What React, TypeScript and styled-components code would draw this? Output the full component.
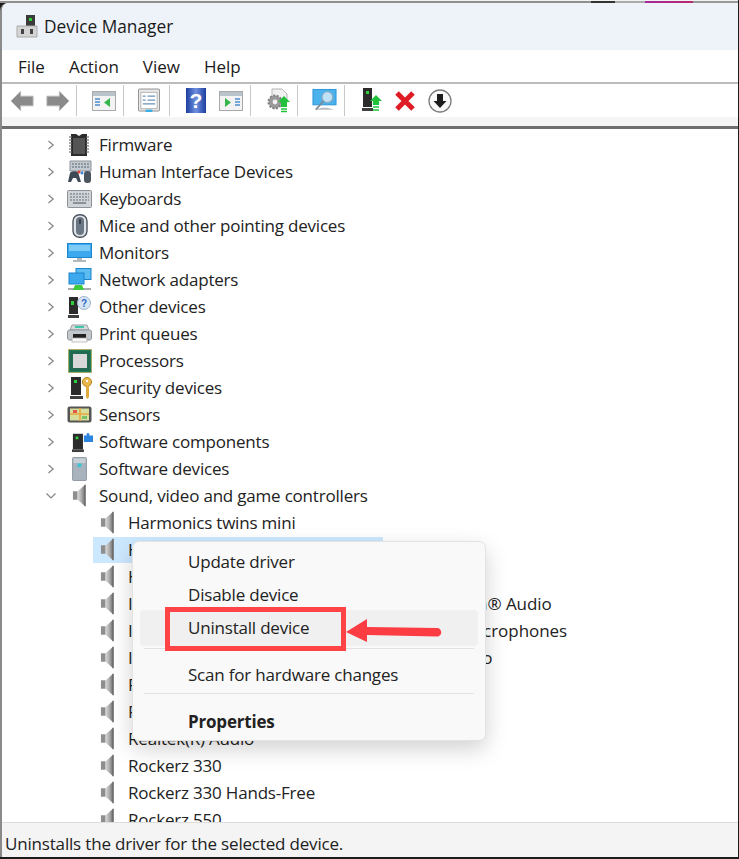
import { ReactNode } from "react";
import styled, { createGlobalStyle } from "styled-components";

const Global = createGlobalStyle`
  html, body { margin: 0; padding: 0; background: #fff; }
  body { font-family: "Open Sans", "Noto Sans", "Liberation Sans", sans-serif; color: #1a1a1a; }
`;

const Window = styled.div`
  position: relative;
  box-sizing: border-box;
  width: 739px;
  height: 859px;
  display: flex;
  flex-direction: column;
  overflow: hidden;
  background: #1c1c1c;
  padding: 0 1px 2px 0;
`;

const Strip = styled.div`
  box-sizing: border-box;
  height: 3px;
  flex: none;
  border-top: 1px solid #f2f2f2;
  background: linear-gradient(
    90deg,
    #8f8f8f 0,
    #8f8f8f 591px,
    #333 591px,
    #333 615px,
    #aaa 615px,
    #aaa 645px,
    #a5289b 645px,
    #b5296f 693px,
    #999 693px
  );
`;

const Frame = styled.div`
  flex: 1;
  min-height: 0;
  display: flex;
  flex-direction: column;
  border-left: 2px solid #8a8a8a;
  border-top-left-radius: 8px;
  overflow: hidden;
  background: #fff;
`;

const TitleBar = styled.div`
  box-sizing: border-box;
  height: 47px;
  flex: none;
  display: flex;
  align-items: center;
  gap: 6px;
  padding: 0 0 1px 14px;
  background: #eef3f9;
  font-size: 17.3px;
`;

const MenuBar = styled.div`
  height: 32px;
  flex: none;
  display: flex;
  align-items: center;
  gap: 24px;
  padding-left: 16px;
  background: #fff;
  border-bottom: 2px solid #bcbcbc;
  font-size: 17px;
`;

const Toolbar = styled.div`
  height: 33px;
  flex: none;
  display: flex;
  align-items: center;
  padding-left: 6px;
  background: #fff;
`;

const Tool = styled.div<{ $w: number; $pl?: number }>`
  box-sizing: border-box;
  width: ${(p) => p.$w}px;
  height: 30px;
  flex: none;
  display: flex;
  align-items: center;
  padding-left: ${(p) => p.$pl ?? 0}px;
`;

const ToolSep = styled.div`
  width: 1px;
  height: 31px;
  flex: none;
  background: #c8c8c8;
`;

const ToolFoot = styled.div`
  height: 9px;
  flex: none;
  background: #f5f5f5;
  border-bottom: 3px solid #6e6e6e;
`;

const Tree = styled.div`
  flex: 1;
  min-height: 0;
  overflow: hidden;
  padding-top: 2px;
  background: #fff;
`;

const Row = styled.div<{ $child?: boolean }>`
  height: 27px;
  display: flex;
  align-items: center;
  white-space: nowrap;
  font-size: 17px;
  letter-spacing: -0.2px;
  color: #222;
  padding-left: ${(p) => (p.$child ? 91 : 42)}px;
`;

const Chevron = styled.div`
  width: 14px;
  height: 14px;
  flex: none;
  display: flex;
  align-items: center;
  justify-content: center;
  margin-right: 9px;
`;

const RowIcon = styled.div`
  width: 32px;
  flex: none;
  height: 27px;
  display: flex;
  align-items: center;
`;

const ChildLabel = styled.div<{ $selected?: boolean; $tail?: boolean }>`
  display: flex;
  align-items: center;
  height: 26px;
  min-width: 283px;
  padding-left: 7px;
  letter-spacing: ${(p) => (p.$tail ? "-0.04px" : "-0.2px")};
  background: ${(p) => (p.$selected ? "#cce8ff" : "transparent")};
`;

const ChildIcon = styled.div`
  width: 28px;
  flex: none;
  display: flex;
  align-items: center;
`;

const StatusBar = styled.div`
  box-sizing: border-box;
  height: 35px;
  flex: none;
  display: flex;
  align-items: center;
  padding: 6px 0 0 3px;
  background: #f4f4f4;
  border-top: 1px solid #dcdcdc;
  font-size: 17px;
  letter-spacing: -0.18px;
  color: #222;
`;

const ContextMenu = styled.div`
  position: absolute;
  left: 132px;
  top: 541px;
  box-sizing: border-box;
  width: 354px;
  height: 200px;
  padding: 4px 7px;
  background: #f9f9f9;
  border: 1px solid #e3e3e3;
  border-radius: 7px;
  box-shadow: 0 8px 22px rgba(0, 0, 0, 0.18);
  font-size: 17px;
  letter-spacing: -0.2px;
  color: #222;
`;

const MenuItem = styled.div<{ $hover?: boolean; $bold?: boolean; $h?: number; $pt?: number; $pb?: number }>`
  box-sizing: border-box;
  height: ${(p) => p.$h ?? 33}px;
  display: flex;
  align-items: center;
  padding: ${(p) => p.$pt ?? 0}px 0 ${(p) => p.$pb ?? 0}px 48px;
  border-radius: 4px;
  font-weight: ${(p) => (p.$bold ? 700 : 400)};
  background: ${(p) => (p.$hover ? "#f0f0f0" : "transparent")};
`;

const MenuSep = styled.div<{ $mt?: number }>`
  height: 1px;
  margin: ${(p) => p.$mt ?? 1}px 4px 1px;
  background: #e2e2e2;
`;

const Highlight = styled.div`
  position: absolute;
  left: 165px;
  top: 607px;
  box-sizing: border-box;
  width: 181px;
  height: 44px;
  border: 5px solid #ff4448;
`;

const Arrow = styled.svg`
  position: absolute;
  left: 344px;
  top: 616px;
`;

function Chev({ open }: { open?: boolean }) {
  return (
    <svg width="12" height="12" viewBox="0 0 12 12" fill="none" stroke="#858585" strokeWidth="1.2">
      {open ? <path d="M1.5 3.5 6 8 10.5 3.5" /> : <path d="M3.5 2 8.2 6 3.5 10" />}
    </svg>
  );
}

function Speaker({ x = 0 }: { x?: number }) {
  return (
    <svg width="15" height="25" viewBox="0 0 16 25" style={{ marginLeft: x }}>
      <defs>
        <linearGradient id="spk" x1="0" x2="1" y1="0" y2="0">
          <stop offset="0" stopColor="#d9d9d9" />
          <stop offset="0.55" stopColor="#a8a8a8" />
          <stop offset="1" stopColor="#6a6a6a" />
        </linearGradient>
      </defs>
      <rect x="1" y="8" width="5" height="9" fill="#8e8e8e" />
      <path d="M6 8 14 1v23l-8-7z" fill="url(#spk)" />
      <path d="M14 1v23" stroke="#6b6b6b" strokeWidth="1.4" />
    </svg>
  );
}

const icons: Record<string, ReactNode> = {
  firmware: (
    <svg width="24" height="24" viewBox="0 0 24 24">
      <path d="M4 1h5l3 2 3-2h5v22H4z" fill="#2b2b2b" />
      <path d="M2 4h20M2 7h20M2 10h20M2 13h20M2 16h20M2 19h20" stroke="#8d8d8d" strokeWidth="1.4" strokeDasharray="2.5 15" />
      <rect x="6" y="5" width="12" height="16" fill="#545454" />
    </svg>
  ),
  hid: (
    <svg width="26" height="24" viewBox="0 0 26 24">
      <path d="M3 1h21v10H3z" fill="#c3cad1" stroke="#8b9299" />
      <path d="M5 4h17M5 7h17" stroke="#7f868d" strokeWidth="1.5" strokeDasharray="2 1" />
      <path d="M1 22l2-9c1-2 6-2 8-1l3 10h-3l-2-4H6l-2 4z" fill="#3f4a57" />
      <rect x="17" y="11" width="7" height="12" rx="3" fill="#4b5560" />
      <circle cx="12" cy="12" r="1.6" fill="#e0453a" />
      <circle cx="15" cy="13" r="1.5" fill="#3a88e0" />
    </svg>
  ),
  keyboard: (
    <svg width="25" height="18" viewBox="0 0 25 18">
      <rect x="0.5" y="0.5" width="24" height="17" rx="1" fill="#cfd3d7" stroke="#8e9398" />
      <path d="M3 4h19M3 7h19M3 10h19" stroke="#8b9096" strokeWidth="1.6" strokeDasharray="2 1" />
      <path d="M6 13h13" stroke="#8b9096" strokeWidth="2" />
    </svg>
  ),
  mouse: (
    <svg width="16" height="24" viewBox="0 0 16 24" style={{ marginLeft: 5 }}>
      <rect x="1" y="0.7" width="14" height="22.6" rx="6.5" fill="#dfe3e7" stroke="#4c5560" strokeWidth="1.4" />
      <rect x="4" y="3" width="8" height="18" rx="4" fill="#6a7683" />
      <rect x="7" y="5" width="2" height="5" rx="1" fill="#36404a" />
    </svg>
  ),
  monitor: (
    <svg width="25" height="20" viewBox="0 0 25 20">
      <rect x="0.5" y="0.5" width="24" height="14" fill="#3ca9ee" stroke="#1b84cc" />
      <rect x="2" y="2" width="21" height="6" fill="#7dcbf7" />
      <path d="M10 15h5v2h4v2H6v-2h4z" fill="#b3b8bd" />
    </svg>
  ),
  network: (
    <svg width="25" height="23" viewBox="0 0 25 23">
      <rect x="9" y="0.5" width="15" height="11" fill="#5cbcf2" stroke="#1b84cc" />
      <rect x="2" y="5" width="15" height="11" fill="#3ca9ee" stroke="#1b84cc" />
      <path d="M1 21h23" stroke="#a8adb2" strokeWidth="2" />
      <path d="M8 17h7l2 5H6z" fill="#3ecb3e" />
    </svg>
  ),
  other: (
    <svg width="25" height="24" viewBox="0 0 25 24">
      <path d="M2 2h9v17H2z" fill="#2b2b2b" />
      <rect x="4" y="6" width="3" height="4" fill="#2fd13a" />
      <path d="M1 20h11v3H1z" fill="#3f3f3f" />
      <circle cx="17" cy="8" r="6.5" fill="#d8e6f4" stroke="#9eb4c9" />
      <text x="17" y="11.5" fontSize="10" fontWeight="700" textAnchor="middle" fill="#2f66c2" fontFamily="Liberation Sans, sans-serif">?</text>
    </svg>
  ),
  print: (
    <svg width="25" height="19" viewBox="0 0 25 19">
      <path d="M5 1h15l2 5H3z" fill="#d5d9dc" stroke="#9aa0a5" />
      <rect x="8" y="2" width="9" height="2" fill="#3fc7a8" />
      <rect x="0.5" y="6" width="24" height="10" rx="2" fill="#c3c8cc" stroke="#8f9499" />
      <rect x="6" y="10" width="13" height="4" fill="#222" />
      <rect x="5" y="14" width="15" height="4" fill="#f6f6f6" stroke="#aaa" strokeWidth="0.7" />
    </svg>
  ),
  processor: (
    <svg width="24" height="24" viewBox="0 0 24 24" style={{ marginLeft: 1 }}>
      <rect x="0.5" y="0.5" width="23" height="23" fill="#1f7d58" stroke="#b79b3d" strokeDasharray="1.5 1" />
      <rect x="2" y="2" width="20" height="20" fill="#21694f" />
      <rect x="5" y="5" width="14" height="14" fill="#d8d8d8" />
    </svg>
  ),
  security: (
    <svg width="24" height="24" viewBox="0 0 24 24" style={{ marginLeft: 2 }}>
      <path d="M2 1h10v18H2z" fill="#2b2b2b" />
      <rect x="5" y="4" width="3" height="3" fill="#2fd13a" />
      <path d="M1 20h13v3H1z" fill="#3f3f3f" />
      <circle cx="18" cy="6" r="4.6" fill="#e8b64a" stroke="#b98a26" />
      <path d="M17 10h3v11l-1.5 2-1.5-2z" fill="#e0ab3c" />
      <circle cx="18" cy="5" r="1.2" fill="#fff" />
    </svg>
  ),
  sensors: (
    <svg width="25" height="17" viewBox="0 0 25 17">
      <rect x="0.5" y="0.5" width="24" height="16" rx="2" fill="#555" />
      <rect x="3" y="2.5" width="19" height="12" fill="#d7dd9c" />
      <path d="M3 8h19M13 2v13" stroke="#eaa93c" strokeWidth="1.6" />
      <rect x="6" y="4" width="4" height="3" fill="#e2574c" />
      <rect x="15" y="10" width="5" height="3" fill="#7cc06a" />
    </svg>
  ),
  softcomp: (
    <svg width="21" height="24" viewBox="0 0 23 24" style={{ marginLeft: 5 }}>
      <path d="M1 3h11v17H1z" fill="#2b2b2b" />
      <rect x="4" y="6" width="3" height="3" fill="#2fd13a" />
      <path d="M0 20h13v3H0z" fill="#3f3f3f" />
      <path d="M13 5h3V3a2 2 0 0 1 3 0v2h4v7H13z" fill="#2c86dd" />
    </svg>
  ),
  softdev: (
    <svg width="15" height="24" viewBox="0 0 16 26" style={{ marginLeft: 5 }}>
      <rect x="0.5" y="0.5" width="15" height="25" rx="1" fill="#a9b3bd" stroke="#8b949d" />
      <rect x="1.5" y="1.5" width="13" height="5" fill="#c6ced6" />
      <rect x="6" y="7" width="4" height="4" fill="#38c6d0" />
    </svg>
  ),
};

const topRows: [string, string][] = [
  ["firmware", "Firmware"],
  ["hid", "Human Interface Devices"],
  ["keyboard", "Keyboards"],
  ["mouse", "Mice and other pointing devices"],
  ["monitor", "Monitors"],
  ["network", "Network adapters"],
  ["other", "Other devices"],
  ["print", "Print queues"],
  ["processor", "Processors"],
  ["security", "Security devices"],
  ["sensors", "Sensors"],
  ["softcomp", "Software components"],
  ["softdev", "Software devices"],
];

const soundRows = [
  "Harmonics twins mini",
  "Headset Hands-Free",
  "Headset Earphone",
  "Intel® Smart Sound Technology for Bluetooth® Audio",
  "Intel® Smart Sound Technology for Digital Microphones",
  "Intel® Smart Sound Technology for USB Audio",
  "Realtek Audio",
  "Realtek Digital Output",
  "Realtek(R) Audio",
  "Rockerz 330",
  "Rockerz 330 Hands-Free",
  "Rockerz 550",
];

function ToolIcons() {
  return (
    <Toolbar>
      <Tool $w={37} $pl={2}>
        <svg width="25" height="22" viewBox="0 0 26 22">
          <path d="M1 11 11 1v5h13v10H11v5z" fill="#8a8a8a" stroke="#b5b5b5" />
        </svg>
      </Tool>
      <Tool $w={31}>
        <svg width="25" height="22" viewBox="0 0 26 22">
          <path d="M25 11 15 1v5H2v10h13v5z" fill="#8a8a8a" stroke="#b5b5b5" />
        </svg>
      </Tool>
      <ToolSep />
      <Tool $w={46} $pl={15}>
        <svg width="24" height="20" viewBox="0 0 24 20">
          <rect x="0.5" y="0.5" width="23" height="19" fill="#f3f3f3" stroke="#a9a9a9" />
          <rect x="1" y="1" width="22" height="4" fill="#b9c3cc" />
          <path d="M3 8h5M3 11h5M3 14h5" stroke="#4f8fd0" strokeWidth="1.6" />
          <path d="M18 7v9l-6-4.5z" fill="#33b54a" />
        </svg>
      </Tool>
      <ToolSep />
      <Tool $w={45} $pl={14}>
        <svg width="22" height="25" viewBox="0 0 23 25">
          <rect x="0.5" y="0.5" width="22" height="23" rx="1" fill="#e8e8e8" stroke="#8e8e8e" />
          <rect x="3" y="4" width="17" height="17" fill="#fff" stroke="#b5b5b5" />
          <path d="M5 8h3M10 8h8M5 12h3M10 12h8M5 16h13" stroke="#6b93bb" strokeWidth="1.3" />
          <rect x="8" y="22" width="7" height="2.5" fill="#36b0e6" />
        </svg>
      </Tool>
      <ToolSep />
      <Tool $w={49} $pl={16}>
        <svg width="20" height="25" viewBox="0 0 20 25">
          <defs>
            <linearGradient id="hlp" x1="0" x2="1" y1="0" y2="0">
              <stop offset="0" stopColor="#1c3f9e" />
              <stop offset="0.5" stopColor="#6f8fe0" />
              <stop offset="1" stopColor="#1c3f9e" />
            </linearGradient>
          </defs>
          <rect width="20" height="25" fill="url(#hlp)" />
          <text x="10" y="20" fontSize="21" fontWeight="700" textAnchor="middle" fill="#fff" fontFamily="Liberation Sans, sans-serif">?</text>
        </svg>
      </Tool>
      <Tool $w={31}>
        <svg width="24" height="20" viewBox="0 0 24 20">
          <rect x="0.5" y="0.5" width="23" height="19" fill="#f3f3f3" stroke="#a9a9a9" />
          <rect x="1" y="1" width="22" height="4" fill="#b9c3cc" />
          <path d="M16 8h5M16 11h5M16 14h5" stroke="#4f8fd0" strokeWidth="1.6" />
          <path d="M6 7v9l6-4.5z" fill="#33b54a" />
        </svg>
      </Tool>
      <ToolSep />
      <Tool $w={46} $pl={15}>
        <svg width="25" height="25" viewBox="0 0 25 25">
          <path d="M6 1h10l5 5v6H6z" fill="#f1f1f1" stroke="#b5b5b5" />
          <circle cx="9" cy="14" r="6.5" fill="#9a9a9a" stroke="#7f7f7f" strokeDasharray="2 1.5" strokeWidth="2" />
          <circle cx="9" cy="14" r="2.4" fill="#f1f1f1" />
          <path d="M18 8l6 6h-3v5h-6v-5h-3z" fill="#22c13c" />
          <path d="M15 21h6M15 23.5h6" stroke="#22c13c" strokeWidth="1.4" />
        </svg>
      </Tool>
      <ToolSep />
      <Tool $w={46} $pl={14}>
        <svg width="25" height="25" viewBox="0 0 26 25">
          <rect x="1" y="1" width="24" height="16" fill="#4cb2ee" stroke="#2c94d8" />
          <path d="M3 22l7-2h6l7 2z" fill="#b9bdc1" />
          <circle cx="16" cy="9" r="5.6" fill="#bfe2f7" stroke="#8ea9bd" strokeWidth="1.2" />
          <path d="M12 13l-8 9" stroke="#7d8a94" strokeWidth="1.8" />
        </svg>
      </Tool>
      <ToolSep />
      <Tool $w={50} $pl={17}>
        <svg width="21" height="25" viewBox="0 0 21 25">
          <path d="M1 0h9v19H1z" fill="#2b2b2b" />
          <rect x="4" y="3" width="3" height="3" fill="#2fd13a" />
          <path d="M0 20h11v3H0z" fill="#3f3f3f" />
          <path d="M14 7l6 6h-3v4h-6v-4H8z" fill="#22c13c" />
          <path d="M11 19h6M11 22h6" stroke="#22c13c" strokeWidth="1.4" />
        </svg>
      </Tool>
      <Tool $w={33}>
        <svg width="20" height="20" viewBox="0 0 20 20">
          <path d="M2 2l16 16M18 2 2 18" stroke="#df1c26" strokeWidth="5" />
        </svg>
      </Tool>
      <Tool $w={30}>
        <svg width="24" height="24" viewBox="0 0 24 24">
          <circle cx="12" cy="12" r="11" fill="#fafafa" stroke="#7d7d7d" strokeWidth="1.3" />
          <path d="M9 5h6v7h3.5L12 19l-6.5-7H9z" fill="#1c1c1c" />
        </svg>
      </Tool>
    </Toolbar>
  );
}

export default function App() {
  return (
    <>
      <Global />
      <Window>
        <Strip />
        <Frame>
          <TitleBar>
            <svg width="22" height="24" viewBox="0 0 22 24">
              <rect x="10" y="1" width="9" height="11" fill="#3b3b3b" />
              <rect x="13" y="4" width="3" height="3" fill="#2fd13a" />
              <path d="M1 12h20v11H1z" fill="#d4d4d4" stroke="#ababab" />
              <rect x="5" y="15" width="3" height="5" fill="#444" />
              <rect x="14" y="15" width="3" height="5" fill="#444" />
            </svg>
            Device Manager
          </TitleBar>
          <MenuBar>
            <span>File</span>
            <span>Action</span>
            <span>View</span>
            <span>Help</span>
          </MenuBar>
          <ToolIcons />
          <ToolFoot />
          <Tree>
            {topRows.map(([icon, label]) => (
              <Row key={label}>
                <Chevron>
                  <Chev />
                </Chevron>
                <RowIcon>{icons[icon]}</RowIcon>
                {label}
              </Row>
            ))}
            <Row>
              <Chevron>
                <Chev open />
              </Chevron>
              <RowIcon>
                <Speaker x={5} />
              </RowIcon>
              Sound, video and game controllers
            </Row>
            {soundRows.map((label, i) => (
              <Row $child key={label}>
                <ChildLabel $selected={i === 1} $tail={label.startsWith("Intel")}>
                  <ChildIcon>
                    <Speaker />
                  </ChildIcon>
                  {label}
                </ChildLabel>
              </Row>
            ))}
          </Tree>
          <StatusBar>Uninstalls the driver for the selected device.</StatusBar>
        </Frame>
        <ContextMenu>
          <MenuItem $pb={2}>Update driver</MenuItem>
          <MenuItem $h={31}>Disable device</MenuItem>
          <MenuItem $hover $h={36} $pb={2}>Uninstall device</MenuItem>
          <MenuSep $mt={2} />
          <MenuItem $h={43} $pt={5}>Scan for hardware changes</MenuItem>
          <MenuSep $mt={0} />
          <MenuItem $h={40} $pt={12} $bold>Properties</MenuItem>
        </ContextMenu>
        <Highlight />
        <Arrow width="98" height="30" viewBox="0 0 98 30">
          <path d="M2 16 23 3v8l70 1a4.2 4.2 0 0 1 0 8.5L23 19v7z" fill="#fb3c42" />
        </Arrow>
      </Window>
    </>
  );
}
